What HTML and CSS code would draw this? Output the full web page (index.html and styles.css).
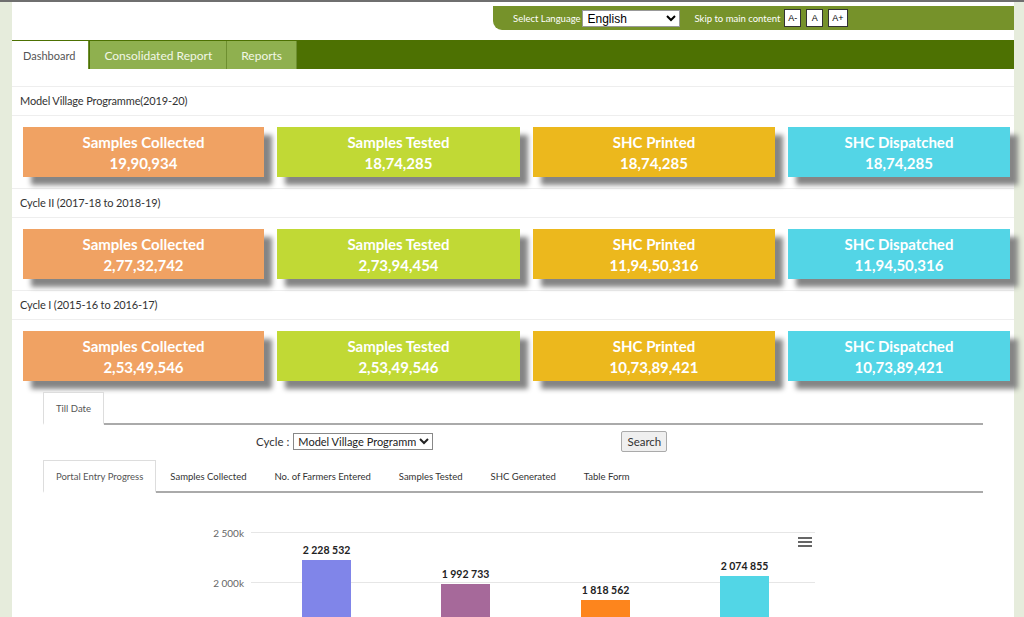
FILE: index.html
```html
<!DOCTYPE html>
<html lang="en">
<head>
<meta charset="utf-8">
<title>Soil Health Card Dashboard</title>
<link rel="stylesheet" href="styles.css">
</head>
<body>
<div class="page">
  <div class="topbar">
    <div class="lang-bar">
      <span class="lang-label">Select Language</span>
      <select class="lang-select"><option>English</option></select>
      <span class="skip">Skip to main content</span>
      <button class="fs-btn">A-</button>
      <button class="fs-btn">A</button>
      <button class="fs-btn">A+</button>
    </div>
  </div>

  <nav class="main-tabs">
    <a class="main-tab active">Dashboard</a>
    <a class="main-tab">Consolidated Report</a>
    <a class="main-tab">Reports</a>
  </nav>

  <div class="dash">
    <div class="section">
      <div class="section-head">Model Village Programme(2019-20)</div>
      <div class="cards">
        <div class="card c-orange"><div class="card-title">Samples Collected</div><div class="card-val">19,90,934</div></div>
        <div class="card c-lime"><div class="card-title">Samples Tested</div><div class="card-val">18,74,285</div></div>
        <div class="card c-yellow"><div class="card-title">SHC Printed</div><div class="card-val">18,74,285</div></div>
        <div class="card c-cyan"><div class="card-title">SHC Dispatched</div><div class="card-val">18,74,285</div></div>
      </div>
    </div>
    <div class="section">
      <div class="section-head">Cycle II (2017-18 to 2018-19)</div>
      <div class="cards">
        <div class="card c-orange"><div class="card-title">Samples Collected</div><div class="card-val">2,77,32,742</div></div>
        <div class="card c-lime"><div class="card-title">Samples Tested</div><div class="card-val">2,73,94,454</div></div>
        <div class="card c-yellow"><div class="card-title">SHC Printed</div><div class="card-val">11,94,50,316</div></div>
        <div class="card c-cyan"><div class="card-title">SHC Dispatched</div><div class="card-val">11,94,50,316</div></div>
      </div>
    </div>
    <div class="section">
      <div class="section-head">Cycle I (2015-16 to 2016-17)</div>
      <div class="cards">
        <div class="card c-orange"><div class="card-title">Samples Collected</div><div class="card-val">2,53,49,546</div></div>
        <div class="card c-lime"><div class="card-title">Samples Tested</div><div class="card-val">2,53,49,546</div></div>
        <div class="card c-yellow"><div class="card-title">SHC Printed</div><div class="card-val">10,73,89,421</div></div>
        <div class="card c-cyan"><div class="card-title">SHC Dispatched</div><div class="card-val">10,73,89,421</div></div>
      </div>
    </div>

    <div class="progress">
      <div class="sub-tabs">
        <a class="sub-tab active">Till Date</a>
      </div>
      <div class="filter-row">
        <label class="cycle-label">Cycle :</label>
        <select class="cycle-select"><option>Model Village Programme(2019-20)</option></select>
        <button class="search-btn">Search</button>
      </div>
      <div class="sub-tabs chart-tabs">
        <a class="sub-tab active">Portal Entry Progress</a>
        <a class="sub-tab">Samples Collected</a>
        <a class="sub-tab">No. of Farmers Entered</a>
        <a class="sub-tab">Samples Tested</a>
        <a class="sub-tab">SHC Generated</a>
        <a class="sub-tab">Table Form</a>
      </div>
      <div class="chart">
        <svg width="940" height="130" viewBox="0 0 940 130">
          <line x1="208" y1="39.5" x2="772" y2="39.5" stroke="#e6e6e6" stroke-width="1"/>
          <line x1="208" y1="89.5" x2="772" y2="89.5" stroke="#e6e6e6" stroke-width="1"/>
          <text x="201" y="44" text-anchor="end" class="axis">2 500k</text>
          <text x="201" y="94" text-anchor="end" class="axis">2 000k</text>
          <rect x="259" y="67" width="49" height="70" fill="#8085e9"/>
          <rect x="398" y="91" width="49" height="50" fill="#a6699a"/>
          <rect x="538" y="107" width="49" height="30" fill="#fd851d"/>
          <rect x="677" y="83" width="49" height="50" fill="#52d6e6"/>
          <text x="283.5" y="61" text-anchor="middle" class="dlabel">2 228 532</text>
          <text x="422.5" y="85" text-anchor="middle" class="dlabel">1 992 733</text>
          <text x="562.5" y="101" text-anchor="middle" class="dlabel">1 818 562</text>
          <text x="701.5" y="77" text-anchor="middle" class="dlabel">2 074 855</text>
          <g stroke="#666" stroke-width="2">
            <line x1="755" y1="45" x2="769" y2="45"/>
            <line x1="755" y1="49" x2="769" y2="49"/>
            <line x1="755" y1="53" x2="769" y2="53"/>
          </g>
        </svg>
      </div>
    </div>
  </div>
</div>
</body>
</html>
```
FILE: styles.css
```css
html, body {
  margin: 0;
  padding: 0;
}
body {
  background: #e6ecdc;
  font-family: "Lato", "Source Sans Pro", "Noto Sans", sans-serif;
  color: #333;
  overflow: hidden;
}
.page {
  margin-left: 12px;
  width: 1002px;
  min-height: 617px;
  background: #fff;
  box-sizing: border-box;
}
body::before {
  content: "";
  display: block;
  height: 2px;
  background: #6f6f6f;
}

/* top bar */
.topbar {
  display: flex;
  justify-content: flex-end;
  padding-top: 4px;
}
.lang-bar {
  width: 521px;
  height: 24px;
  box-sizing: border-box;
  background: #76922a;
  border-bottom-left-radius: 9px;
  display: flex;
  align-items: center;
  padding-left: 20px;
  color: #fff;
  font-size: 9.5px;
}
.lang-label {
  margin-right: 1px;
}
.lang-select {
  width: 98px;
  height: 17px;
  font-family: "Liberation Sans", Arial, sans-serif;
  font-size: 12px;
  padding: 0 0 0 1px;
  border: 1px solid #999;
  background: #fff;
  color: #000;
  margin-right: 15px;
}
.skip {
  margin-right: 4px;
}
.fs-btn {
  height: 18px;
  min-width: 17px;
  padding: 0 3px;
  margin-right: 5px;
  background: #fff;
  border: 1px solid #333;
  font-family: "Liberation Sans", Arial, sans-serif;
  font-size: 9px;
  color: #000;
}

/* main tabs */
.main-tabs {
  margin-top: 10px;
  height: 29px;
  background: #4d7102;
  display: flex;
  align-items: stretch;
}
.main-tab {
  display: flex;
  align-items: center;
  padding: 0 14px 0 14px;
  font-size: 12px;
  background: #8fb04f;
  color: #f2f7e6;
  border-right: 1px solid #6e8f30;
  margin-top: 1px;
}
.main-tab.active {
  background: #fff;
  color: #555;
  font-size: 11px;
  padding: 0 13px 0 11px;
  margin-right: 1px;
}

/* sections */
.dash {
  padding-top: 17px;
}
.section-head {
  border-top: 1px solid #eee;
  border-bottom: 1px solid #eee;
  height: 28px;
  line-height: 28px;
  padding-left: 8px;
  font-size: 11px;
  letter-spacing: -0.15px;
  color: #333;
}
.cards {
  display: grid;
  grid-template-columns: 241px 243px 242px 222px;
  column-gap: 13px;
  padding: 11px 0 11px 11px;
}
.card {
  height: 50px;
  box-sizing: border-box;
  padding-top: 2px;
  box-shadow: 8px 8px 5px #858585;
  color: #fff;
  font-weight: bold;
  font-size: 15px;
  text-align: center;
  display: flex;
  flex-direction: column;
  justify-content: center;
  line-height: 21px;
}
.c-orange { background: #f0a263; }
.c-lime { background: #c1d935; }
.c-yellow { background: #ecb81d; }
.c-cyan { background: #53d5e6; }

/* progress */
.progress {
  margin: 0 0 0 31px;
  width: 940px;
}
.sub-tabs {
  display: flex;
  border-bottom: 2px solid #aaa;
  height: 31px;
  font-size: 9.5px;
}
.sub-tab {
  display: flex;
  align-items: center;
  padding: 0 14px;
  color: #333;
  margin-bottom: -2px;
}
.sub-tab.active {
  background: #fff;
  border: 1px solid #ddd;
  border-bottom: 2px solid #fff;
  padding: 0 12px;
  color: #555;
}
.filter-row {
  display: flex;
  align-items: center;
  height: 33px;
  padding-left: 213px;
  font-size: 11.5px;
}
.cycle-label {
  color: #333;
  margin-right: 4px;
}
.cycle-select {
  width: 140px;
  height: 17px;
  font-family: "Lato", sans-serif;
  font-size: 11px;
  padding: 0;
  border: 1px solid #888;
  background: #fff;
  color: #222;
}
.search-btn {
  margin-left: 188px;
  height: 21px;
  width: 46px;
  padding: 0;
  font-family: "Lato", sans-serif;
  font-size: 11.5px;
  border: 1px solid #aaa;
  border-radius: 2px;
  background: #efefef;
  color: #333;
}
.chart-tabs {
  margin-top: 2px;
}
.chart-tabs .sub-tab.active {
  padding: 0 12px 0 12px;
}
.chart svg {
  display: block;
}
.axis {
  font-family: "Lato", sans-serif;
  font-size: 10px;
  fill: #666;
}
.dlabel {
  font-family: "Lato", sans-serif;
  font-size: 10.5px;
  font-weight: bold;
  fill: #222;
}
```
